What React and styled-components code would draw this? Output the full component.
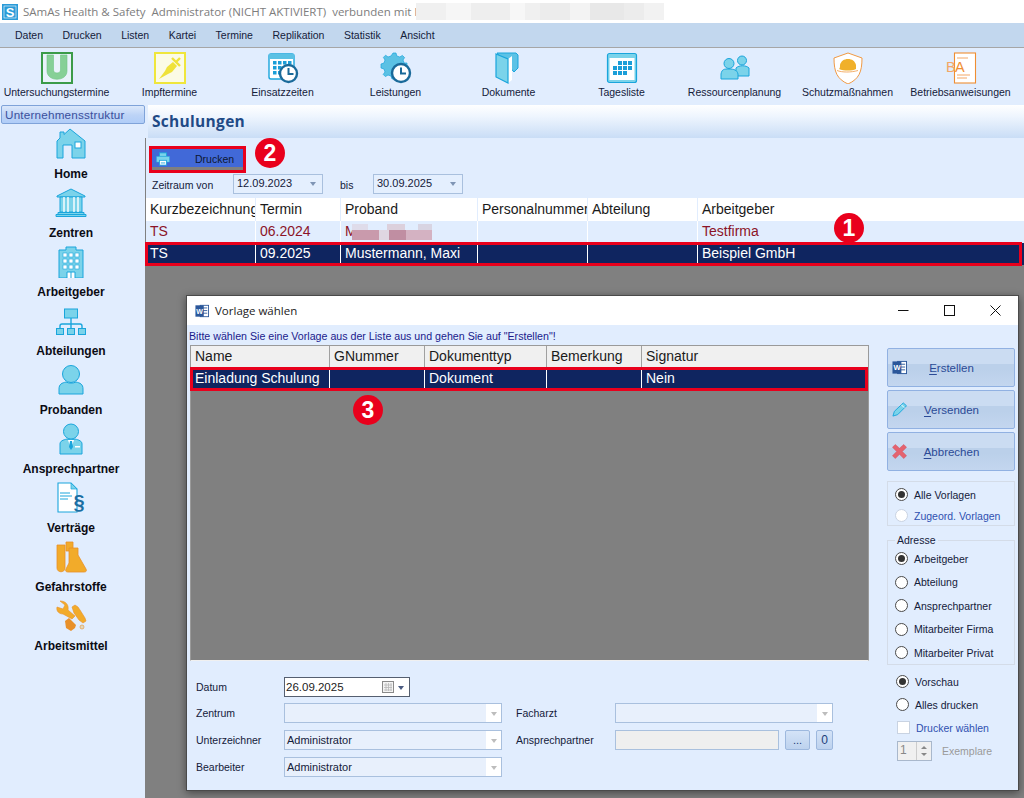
import React from "react";
import styled, { createGlobalStyle } from "styled-components";

const Global = createGlobalStyle`
  html, body { margin: 0; padding: 0; background: #808080; overflow: hidden; }
  * { box-sizing: border-box; }
`;

const Root = styled.div`
  position: relative;
  width: 1024px;
  height: 798px;
  overflow: hidden;
  display: flex;
  flex-direction: column;
  font-family: "Liberation Sans", Arial, sans-serif;
  font-size: 10.5px;
  color: #111;
  background: #808080;
`;
const TitleBar = styled.div`
  height: 23px;
  background: #fff;
  display: flex;
  align-items: center;
  padding-left: 2px;
  gap: 5px;
  font-family: "Open Sans", sans-serif;
  font-size: 11.5px;
  color: #7d7d7d;
  white-space: pre;
`;
const Mosaic = styled.div`
  width: 248px;
  height: 17px;
  margin-left: -6px;
  background: linear-gradient(90deg, #f0f0f0 0 12%, #f6f6f6 12% 22%, #eeeeee 22% 38%, #f7f7f7 38% 44%, #f0f0f0 44% 50%, #ececec 50% 62%, #f3f3f3 62% 70%, #e8e8e8 70% 84%, #ececec 84% 92%, #f2f2f2 92% 100%);
`;
const MenuBar = styled.div`
  height: 25px;
  background: #c2d7ee;
  border-bottom: 1px solid #a6a6a6;
  display: flex;
  align-items: center;
  padding-left: 15px;
  gap: 19.5px;
  color: #14203a;
`;
const ToolBar = styled.div`
  height: 57px;
  background: #e1edfe;
  display: grid;
  grid-template-columns: repeat(9, 113px);
`;
const ToolItem = styled.div`
  display: flex;
  flex-direction: column;
  align-items: center;
  padding-top: 4px;
  white-space: nowrap;
  color: #14203a;
`;
const ToolLabel = styled.span`
  margin-top: 2px;
  line-height: 13px;
`;
const Body = styled.div`
  flex: 1;
  display: flex;
  min-height: 0;
`;
const Sidebar = styled.div`
  width: 145px;
  background: #e1edfe;
  display: flex;
  flex-direction: column;
`;
const SideTab = styled.div`
  height: 19px;
  margin: 0 0 4px 1px;
  width: 144px;
  border: 1px solid #7fa3d9;
  border-radius: 2px;
  background: linear-gradient(#dbe8fb, #bcd3f6 55%, #b0cdf8);
  color: #3a4f9c;
  font-size: 11.7px;
  line-height: 17px;
  padding-left: 3px;
  letter-spacing: .2px;
`;
const SideItem = styled.div`
  height: 59px;
  padding-right: 3px;
  display: flex;
  flex-direction: column;
  align-items: center;
`;
const SideLabel = styled.span`
  margin-top: 7px;
  font-weight: 700;
  font-size: 12px;
  line-height: 14px;
  color: #0b0b14;
`;
const Main = styled.div`
  flex: 1;
  padding-left: 1px;
  display: flex;
  flex-direction: column;
  min-width: 0;
`;
const Header = styled.div`
  height: 33px;
  margin-left: -1px;
  border-left: 3px solid #e1edfe;
  background: linear-gradient(#fff, #eef5fe 35%, #c9ddf6);
  padding-left: 4px;
  font-family: "Open Sans", sans-serif;
  font-weight: 700;
  font-size: 15.5px;
  line-height: 32px;
  color: #1f4a86;
  letter-spacing: .3px;
`;
const Panel = styled.div`
  height: 60px;
  background: #e1edfe;
  padding: 8px 0 0 3px;
`;
const PrintButton = styled.div`
  width: 97px;
  height: 27px;
  border: 3px solid #e9001c;
  background: linear-gradient(#4169d8 88%, #7f7f7f 88%);
  display: flex;
  align-items: center;
  padding: 0 0 2px 4px;
  color: #0d1730;
`;
const PrintText = styled.span`
  margin-left: 25px;
`;
const FilterRow = styled.div`
  display: grid;
  grid-template-columns: 81px 90px 17px 33px 90px;
  align-items: center;
  margin: 1px 0 0 3px;
  height: 20px;
  color: #14203a;
`;
const FilterLabel = styled.span`
  grid-column: ${p => p.$col};
  padding-top: 1px;
`;
const DateBox = styled.div`
  grid-column: ${p => p.$col};
  height: 20px;
  border: 1px solid #a9c0de;
  background: #e4effe;
  display: flex;
  align-items: center;
  justify-content: space-between;
  padding: 0 6px 2px 3px;
  font-size: 11px;
  color: #14203a;
`;
const Caret = styled.span`
  width: 0;
  height: 0;
  margin-top: 2px;
  border-left: 3.5px solid transparent;
  border-right: 3.5px solid transparent;
  border-top: 4px solid ${p => p.$color || "#7f95b5"};
`;
const Row = styled.div`
  position: relative;
  display: flex;
  height: ${p => p.$h}px;
  background: ${p => p.$bg};
  color: ${p => p.$color};
  font-size: 14px;
  &::after {
    content: "";
    display: ${p => (p.$outlined ? "block" : "none")};
    position: absolute;
    left: ${p => p.$ol}px;
    right: ${p => p.$or}px;
    top: -1px;
    bottom: -1px;
    border: 3px solid #e9001c;
    pointer-events: none;
  }
`;
const Cell = styled.div`
  width: ${p => (p.$w ? `${p.$w}px` : "auto")};
  flex: ${p => (p.$w ? "none" : "1")};
  padding-left: 4px;
  border-right: 1px solid ${p => (p.$w ? p.$line : "transparent")};
  line-height: ${p => p.$lh}px;
  white-space: nowrap;
  overflow: hidden;
`;
const Smudge = styled.span`
  display: inline-block;
  width: 80px;
  height: 16px;
  vertical-align: -4px;
  margin-left: -5px;
  background:
    linear-gradient(90deg, #dfdcea 0 20%, transparent 20% 44%, #dcd0dc 44% 66%, transparent 66% 82%, #d8d4e2 82% 100%) top / 100% 6px no-repeat,
    linear-gradient(90deg, #c99aac 0 34%, #dfd6e2 34% 46%, #c08ea2 46% 68%, #d4b2c2 68% 100%) bottom / 100% 10px no-repeat;
`;
const Desk = styled.div`
  flex: 1;
`;
const Badge = styled.div`
  position: absolute;
  left: ${p => p.$x - 15}px;
  top: ${p => p.$y - 15}px;
  width: 30px;
  height: 30px;
  border-radius: 50%;
  background: #e9001c;
  color: #fff;
  font-weight: 700;
  font-size: 23px;
  line-height: 30px;
  text-align: center;
  z-index: 5;
`;
const Modal = styled.div`
  position: absolute;
  left: 186px;
  top: 295px;
  width: 833px;
  height: 496px;
  border: 1px solid #4a4a4a;
  box-shadow: 0 2px 8px rgba(0, 0, 0, .45);
  display: flex;
  flex-direction: column;
  background: #e1edfe;
`;
const ModalTitle = styled.div`
  height: 29px;
  background: #fff;
  display: flex;
  align-items: center;
  padding-left: 8px;
  font-family: "Open Sans", sans-serif;
  font-size: 11.5px;
  color: #222;
  flex: none;
`;
const TitleText = styled.span`
  margin-left: 6px;
`;
const WinControls = styled.div`
  margin-left: auto;
  display: flex;
`;
const WinButton = styled.div`
  width: 46px;
  height: 29px;
  display: flex;
  align-items: center;
  justify-content: center;
`;
const ModalBody = styled.div`
  flex: 1;
  display: flex;
  min-height: 0;
`;
const LeftCol = styled.div`
  width: 682px;
  padding: 4px 0 0 2px;
  flex: none;
`;
const Hint = styled.div`
  height: 16px;
  line-height: 14px;
  font-size: 10.65px;
  color: #1a1a8c;
  white-space: nowrap;
`;
const TemplateGrid = styled.div`
  width: 679px;
  margin-left: 1px;
  height: 316px;
  background: #808080;
  border: 1px solid #9a9a9a;
  border-bottom-color: #f0f0f0;
`;
const Form = styled.div`
  display: grid;
  grid-template-columns: 88px 218px 113px 218px;
  grid-template-rows: 26px 27px 27px 20px;
  margin: 16px 0 0 7px;
  color: #14203a;
`;
const FormLabel = styled.div`
  height: 20px;
  line-height: 20px;
  padding-left: ${p => p.$pad || 0}px;
  white-space: nowrap;
`;
const DateInput = styled.div`
  width: 126px;
  height: 20px;
  border: 1px solid #555f70;
  background: #fff;
  display: flex;
  align-items: center;
  padding: 0 5px 0 1px;
  font-size: 11.5px;
  color: #222;
`;
const CalIcon = styled.svg`
  margin-left: auto;
  margin-right: 2px;
`;
const Select = styled.div`
  height: 20px;
  border: 1px solid #a9c0de;
  background: #e8f0fc;
  display: flex;
  align-items: center;
  padding-left: 2px;
  font-size: 11px;
  color: #14203a;
`;
const SelectArrow = styled.div`
  margin-left: auto;
  width: 15px;
  height: 18px;
  background: #fff;
  display: flex;
  align-items: center;
  justify-content: center;
`;
const ContactRow = styled.div`
  display: flex;
  gap: 6px;
  height: 20px;
`;
const ReadOnly = styled.div`
  width: 164px;
  border: 1px solid #a9c0de;
  background: #efefef;
`;
const SmallButton = styled.div`
  width: ${p => p.$w}px;
  border: 1px solid #9db8de;
  border-radius: 2px;
  background: linear-gradient(#d4e3f7, #bdd2ee);
  color: #1d3f7a;
  text-align: center;
  font-size: ${p => p.$size}px;
  line-height: 18px;
`;
const RightCol = styled.div`
  width: 128px;
  margin-left: 18px;
  padding-top: 23px;
  display: flex;
  flex-direction: column;
`;
const ActionButton = styled.div`
  height: 39px;
  margin-bottom: 3px;
  border: 1px solid #91b1e2;
  border-radius: 2px;
  background: linear-gradient(#cbdcf2 0 40%, #bbd0ea 40% 55%, #c3d6ef 100%);
  display: flex;
  align-items: center;
  padding-left: 4px;
  color: #2b4a96;
  flex: none;
`;
const ActionText = styled.span`
  flex: 1;
  text-align: center;
  padding-right: 18px;
  font-size: 11.5px;
  & u { text-underline-offset: 2px; }
`;
const Box = styled.div`
  position: relative;
  height: ${p => p.$h}px;
  margin-top: ${p => p.$mt}px;
  padding: ${p => p.$pt}px 0 0 7px;
  border: 1px solid #d4dce8;
`;
const PlainStack = styled.div`
  margin-top: 5px;
`;
const Legend = styled.span`
  position: absolute;
  left: 7px;
  top: -7px;
  padding: 0 2px;
  background: #e1edfe;
  line-height: 13px;
  color: #14203a;
`;
const RadioRow = styled.div`
  height: ${p => p.$h}px;
  display: flex;
  align-items: center;
  gap: 6px;
  padding-left: ${p => p.$pad || 0}px;
  color: ${p => p.$color || "#14203a"};
  white-space: nowrap;
`;
const Radio = styled.span`
  width: 13px;
  height: 13px;
  border-radius: 50%;
  background: #fff;
  border: 1px solid ${p => (p.$off ? "#c9d3e2" : "#4a4a4a")};
  display: flex;
  align-items: center;
  justify-content: center;
  flex: none;
  &::after {
    content: "";
    display: ${p => (p.$on ? "block" : "none")};
    width: 7px;
    height: 7px;
    border-radius: 50%;
    background: #333;
  }
`;
const Check = styled.span`
  width: 13px;
  height: 13px;
  background: #fff;
  border: 1px solid #c9d3e2;
  flex: none;
`;
const SpinRow = styled.div`
  display: flex;
  align-items: center;
  gap: 10px;
  margin: 1.5px 0 0 10px;
  color: #9a9a9a;
`;
const Spinner = styled.div`
  width: 35px;
  height: 20px;
  border: 1px solid #a9b8cc;
  background: #f0f0f0;
  display: flex;
  padding-left: 2px;
  line-height: 17px;
  font-size: 12px;
  color: #888;
`;
const SpinArrows = styled.div`
  margin-left: auto;
  width: 15px;
  border-left: 1px solid #ccc;
  display: flex;
  flex-direction: column;
  align-items: center;
  justify-content: space-around;
  padding: 2px 0;
`;
const SpinUp = styled.span`
  width: 0;
  height: 0;
  border-left: 3px solid transparent;
  border-right: 3px solid transparent;
  border-bottom: 3px solid #888;
`;
const SpinDown = styled(SpinUp)`
  border-bottom: 0;
  border-top: 3px solid #888;
`;

/* ---------- icons ---------- */
const F = "#7bd3ea";
const S = "#1aa5dc";
const O = "#f2ab2a";
const OD = "#e8902a";

const Svg = ({ children, size = 32 }) => (
  <svg width={size} height={size} viewBox="0 0 32 32" style={{ display: "block", flex: "none" }}>{children}</svg>
);

const IconU = () => (
  <Svg>
    <rect x="1" y="1" width="30" height="30" fill="#e9f2fb" stroke="#3b9b49" strokeWidth="2" />
    <path d="M6 3h6.500v15c0 4 7 4 7 0V3H26v16c0 11-20 11-20 0z" fill="#86d096" stroke="#6fc483" strokeWidth=".6" />
  </Svg>
);
const IconSyringe = () => (
  <Svg>
    <rect x="1" y="1" width="30" height="30" fill="#fbfbe6" stroke="#efe63c" strokeWidth="2" />
    <path d="M5 27l6-8 2-4 6-5 4 4-5 6-4 2z" fill="#efe23a" />
    <path d="M18 6l8 8M22 10l4-4" stroke="#efe23a" strokeWidth="2.400" fill="none" />
  </Svg>
);
const IconShiftCal = () => (
  <Svg>
    <rect x="2" y="2" width="25" height="25" rx="2" fill="#fff" stroke="#1aa5dc" strokeWidth="1.400" />
    <rect x="2" y="2" width="25" height="5" fill="#5bc1e4" />
    {[[6, 9], [11, 9], [16, 9], [21, 9], [6, 14], [11, 14], [16, 14], [6, 19], [11, 19]].map(([x, y]) => (
      <rect key={`${x}${y}`} x={x} y={y} width="3.500" height="3.500" fill="#1b9ed8" />
    ))}
    <circle cx="21.500" cy="21.500" r="8.500" fill="#fff" stroke="#1a6a9a" strokeWidth="2.400" />
    <path d="M21.500 16v6h5" fill="none" stroke="#1a6a9a" strokeWidth="2" />
  </Svg>
);
const IconGearClock = () => (
  <Svg>
    <path d="M13 1h3l.8 3 3 1 2.600-1.600 2.200 2.200L23 8l1.200 3H27v4l-3 1-1 3 1.600 2.600-3 3-2.600-1.600-3 1L15 27h-3l-1-3-3-1-2.600 1.600-2.200-2.200L5 20l-1-3-3-1v-4l3-1 1-3L3.400 5.400l2.200-2.200L8 5l3-1z" fill="#5bc1e4" stroke="#1aa5dc" strokeWidth=".7" />
    <circle cx="21" cy="21" r="9" fill="#fff" stroke="#1a6a9a" strokeWidth="2.400" />
    <path d="M21 15.500v6h5" fill="none" stroke="#1a6a9a" strokeWidth="2" />
  </Svg>
);
const IconDocs = () => (
  <Svg>
    <path d="M4 1h19l2 2v13l-4 4z" fill="#5cc2e6" stroke={S} strokeWidth="1" />
    <path d="M15 7l4-3v24l-4 3z" fill="#fff" />
    <path d="M3 2l12 5v24L3 25z" fill={F} stroke={S} strokeWidth="1.200" />
  </Svg>
);
const IconDayList = () => (
  <Svg>
    <rect x="1.500" y="1.500" width="29" height="29" rx="2" fill={F} stroke={S} strokeWidth="1.200" />
    <rect x="3.500" y="6" width="25" height="22" fill="#fff" />
    {[[12, 9], [17, 9], [22, 9], [7, 14], [12, 14], [17, 14], [22, 14], [7, 19], [12, 19], [17, 19]].map(([x, y]) => (
      <rect key={`${x}${y}`} x={x} y={y} width="4" height="4" fill="#1b9ed8" />
    ))}
  </Svg>
);
const IconPeople = () => (
  <Svg>
    <circle cx="23" cy="8.500" r="4.500" fill={F} stroke={S} />
    <path d="M17 16c3-3 10-3 13 0v8H17z" fill={F} stroke={S} />
    <circle cx="10" cy="11.500" r="5" fill={F} stroke={S} />
    <path d="M2 27v-5c1-5 3-5 8-5s8 1 9 5v5z" fill={F} stroke={S} />
  </Svg>
);
const IconShield = () => (
  <Svg>
    <path d="M16 1l14 5c0 14-3 21-14 26C5 27 2 20 2 6z" fill="#fff" stroke="#f09a45" strokeWidth="1" />
    <path d="M7 17c1-1 1-2 1-4 1-4 4-6 8-6s7 2 8 6v4c-4 2-12 2-17 0z" fill="#f0b02a" />
    <path d="M5 18.500c5 2 14 2 21 0" stroke="#f09a45" strokeWidth=".8" fill="none" />
  </Svg>
);
const IconBA = () => (
  <Svg>
    <rect x="9.500" y="1" width="21" height="30" fill="#fff" stroke="#ef8e32" strokeWidth="1.100" />
    <text x="1" y="20" fontFamily="Liberation Sans" fontSize="14.500" fill="#f3a766">B</text>
    <text x="10" y="20" fontFamily="Liberation Sans" fontSize="14.500" fill="#ef8e32">A</text>
    <path d="M12 6h11M12 23h13M12 26h10" stroke="#f3a766" strokeWidth="1" />
  </Svg>
);
const IconHome = () => (
  <Svg>
    <path d="M2 13l3-3V4h4v2.500L15 1l15 12v17H17V17H8v13H2z" fill={F} stroke={S} strokeWidth="1" />
    <rect x="20" y="14" width="6" height="6" fill="#fff" stroke={S} />
  </Svg>
);
const IconTemple = () => (
  <Svg>
    <path d="M2 9L16 2l14 7v1H2z" fill={F} stroke={S} />
    <path d="M5 10h22v15H5z" fill={F} stroke={S} />
    <path d="M9 10v15M13 10v15M19 10v15M23 10v15" stroke="#fff" strokeWidth="1.400" />
    <path d="M3 25.500h26v2H3zM1 27.500h30v2H1z" fill={F} stroke={S} />
  </Svg>
);
const IconBuilding = () => (
  <Svg>
    <path d="M4 4h7V1h10v3h7v28H4z" fill={F} stroke={S} />
    {[8, 14, 20].map(y => [8, 14, 20].map(x => (
      <rect key={`${x}${y}`} x={x} y={y - 1} width="4" height="4" fill="#fff" stroke={S} strokeWidth=".6" />
    )))}
    <path d="M12 32v-6h8v6M16 26v6" fill="#fff" stroke={S} />
  </Svg>
);
const IconOrg = () => (
  <Svg>
    <path d="M16 13v5M5 24v-3c0-1 1-2 2-2h18c1 0 2 1 2 2v3M16 18v6" stroke={S} strokeWidth="1.400" fill="none" />
    <rect x="9.500" y="4" width="13" height="9" fill={F} stroke={S} />
    <rect x="1.500" y="23.500" width="7" height="6" fill={F} stroke={S} />
    <rect x="12.500" y="23.500" width="7" height="6" fill={F} stroke={S} />
    <rect x="23.500" y="23.500" width="7" height="6" fill={F} stroke={S} />
  </Svg>
);
const IconPerson = () => (
  <Svg>
    <circle cx="16" cy="10" r="8.500" fill={F} stroke={S} />
    <path d="M4 30v-5c0-5 3-6 7-7 3 1.500 7 1.500 10 0 4 1 7 2 7 7v5z" fill={F} stroke={S} />
  </Svg>
);
const IconContact = () => (
  <Svg>
    <circle cx="16" cy="8.500" r="7.500" fill={F} stroke={S} />
    <path d="M5 31v-10c0-3 3-4 7-5 2 1 6 1 8 0 4 1 7 2 7 5v10z" fill={F} stroke={S} />
    <path d="M13 17h6l-3 9z" fill="#fff" />
    <path d="M15 18h2l1 6-2 3-2-3z" fill={S} />
    <rect x="20" y="23" width="5" height="1.500" fill="#fff" />
  </Svg>
);
const IconContract = () => (
  <Svg>
    <path d="M3 1h13l6 6v23H3z" fill="#fff" stroke={S} strokeWidth="1.100" />
    <path d="M16 1v6h6z" fill={F} stroke={S} strokeWidth=".7" />
    <path d="M5 11h10M5 14h12M5 17h8" stroke={S} strokeWidth="1" />
    <text x="18.500" y="27" fontFamily="Liberation Sans" fontWeight="700" fontSize="20" fill="#1b6ea2">§</text>
  </Svg>
);
const IconFlask = () => (
  <Svg>
    <path d="M2 4h8v23c0 5-8 5-8 0z" fill={O} stroke={OD} strokeWidth=".8" />
    <path d="M11 1h7v9h-7z" fill={O} stroke={OD} strokeWidth=".8" />
    <path d="M14 7h9v7l8 14c1 2 0 3-2 3H13c-2 0-3-1-2-3l3-6z" fill={O} stroke={OD} strokeWidth=".8" />
  </Svg>
);
const IconTools = () => (
  <Svg>
    <path d="M2 7c-1 4 2 7 6 7l9 5 3-3-7-6c1-5-2-9-8-9l5 4-2 4z" fill={O} stroke={OD} strokeWidth=".6" />
    <path d="M17 7l3-2 3 2 2 3 5 8 1 3-3 2-4-3-5-7z" fill={O} stroke={OD} strokeWidth=".6" />
    <path d="M10 21l4-3 7 7-1 3-4 3-5-3z" fill={OD} />
    <circle cx="27" cy="27" r="2" fill="#e0d8c0" stroke={OD} strokeWidth=".6" />
  </Svg>
);
const IconPrinter = ({ size = 14 }) => (
  <Svg size={size}>
    <rect x="8" y="2" width="16" height="8" fill={F} stroke={S} strokeWidth="2" />
    <rect x="1" y="10" width="30" height="13" fill={F} stroke={S} strokeWidth="1" />
    <rect x="8" y="19" width="16" height="11" fill="#fff" stroke={S} strokeWidth="2" />
    <path d="M11 25h10" stroke={S} strokeWidth="2" />
  </Svg>
);
const IconWord = ({ size = 14 }) => (
  <Svg size={size}>
    <rect x="12" y="3" width="19" height="26" fill="#fff" stroke="#2b579a" strokeWidth="2" />
    <path d="M18 9h10M18 15h10M18 21h10" stroke="#2b579a" strokeWidth="2" />
    <rect x="1" y="3" width="19" height="26" fill="#2b579a" />
    <text x="10.500" y="22" textAnchor="middle" fontFamily="Liberation Sans" fontWeight="700" fontSize="16" fill="#fff">W</text>
  </Svg>
);
const IconPencil = () => (
  <Svg size={15}>
    <path d="M2 30l3-10L24 2l7 6-19 19z" fill={F} stroke={S} strokeWidth="2" />
    <path d="M20 6l6 6" stroke="#fff" strokeWidth="2" />
  </Svg>
);
const IconCross = () => (
  <Svg size={15}>
    <path d="M7 1l9 8 9-8 6 6-9 9 9 9-6 6-9-9-9 9-6-6 9-9-9-9z" fill="#e4636f" stroke="#cf4b5a" strokeWidth="1" />
  </Svg>
);

/* ---------- data ---------- */
const tools = [
  ["Untersuchungstermine", IconU], ["Impftermine", IconSyringe], ["Einsatzzeiten", IconShiftCal],
  ["Leistungen", IconGearClock], ["Dokumente", IconDocs], ["Tagesliste", IconDayList],
  ["Ressourcenplanung", IconPeople], ["Schutzmaßnahmen", IconShield], ["Betriebsanweisungen", IconBA],
];
const sideItems = [
  ["Home", IconHome], ["Zentren", IconTemple], ["Arbeitgeber", IconBuilding], ["Abteilungen", IconOrg],
  ["Probanden", IconPerson], ["Ansprechpartner", IconContact], ["Verträge", IconContract],
  ["Gefahrstoffe", IconFlask], ["Arbeitsmittel", IconTools],
];
const menus = ["Daten", "Drucken", "Listen", "Kartei", "Termine", "Replikation", "Statistik", "Ansicht"];
const mainCols = [110, 85, 137, 110, 110, 0];
const tplCols = [139, 95, 122, 95, 0];

const Cells = ({ cols, values, line, lh }) => (
  <>
    {cols.map((w, i) => (
      <Cell key={i} $w={w} $line={line} $lh={lh}>{values[i]}</Cell>
    ))}
  </>
);

export default function App() {
  return (
    <Root>
      <Global />
      <TitleBar>
        <svg width="16" height="16" viewBox="0 0 16 16">
          <rect width="16" height="16" fill="#2a9bd8" />
          <rect x="2" y="2" width="12" height="12" fill="none" stroke="#fff" strokeWidth=".6" />
          <text x="8" y="13" textAnchor="middle" fontFamily="Liberation Sans" fontWeight="700" fontSize="13" fill="#fff">S</text>
        </svg>
        <span>SAmAs Health &amp; Safety  Administrator (NICHT AKTIVIERT)  verbunden mit l</span>
        <Mosaic />
      </TitleBar>
      <MenuBar>
        {menus.map(m => <span key={m}>{m}</span>)}
      </MenuBar>
      <ToolBar>
        {tools.map(([label, Icon]) => (
          <ToolItem key={label}>
            <Icon />
            <ToolLabel>{label}</ToolLabel>
          </ToolItem>
        ))}
      </ToolBar>
      <Body>
        <Sidebar>
          <SideTab>Unternehmensstruktur</SideTab>
          {sideItems.map(([label, Icon]) => (
            <SideItem key={label}>
              <Icon />
              <SideLabel>{label}</SideLabel>
            </SideItem>
          ))}
        </Sidebar>
        <Main>
          <Header>Schulungen</Header>
          <Panel>
            <PrintButton>
              <IconPrinter />
              <PrintText>Drucken</PrintText>
            </PrintButton>
            <FilterRow>
              <FilterLabel $col={1}>Zeitraum von</FilterLabel>
              <DateBox $col={2}>12.09.2023<Caret /></DateBox>
              <FilterLabel $col={4}>bis</FilterLabel>
              <DateBox $col={5}>30.09.2025<Caret /></DateBox>
            </FilterRow>
          </Panel>
          <Row $h={23} $bg="#fff" $color="#1a1a1a">
            <Cells cols={mainCols} line="#e1edfe" lh={22} values={["Kurzbezeichnung", "Termin", "Proband", "Personalnummer", "Abteilung", "Arbeitgeber"]} />
          </Row>
          <Row $h={22} $bg="#e1edfe" $color="#8c1428">
            <Cells cols={mainCols} line="#fff" lh={21} values={["TS", "06.2024", <>M<Smudge /></>, "", "", "Testfirma"]} />
          </Row>
          <Row $h={22} $bg="#0f2560" $color="#fff" $outlined $ol={-1} $or={2}>
            <Cells cols={mainCols} line="#fff" lh={20} values={["TS", "09.2025", "Mustermann, Maxi", "", "", "Beispiel GmbH"]} />
          </Row>
          <Desk />
        </Main>
      </Body>

      <Badge $x={849} $y={228}>1</Badge>
      <Badge $x={270} $y={153}>2</Badge>
      <Badge $x={368} $y={410}>3</Badge>

      <Modal>
        <ModalTitle>
          <IconWord />
          <TitleText>Vorlage wählen</TitleText>
          <WinControls>
            <WinButton>
              <svg width="11" height="11" viewBox="0 0 11 11"><path d="M0 5.500h10.500" stroke="#111" strokeWidth="1" /></svg>
            </WinButton>
            <WinButton>
              <svg width="11" height="11" viewBox="0 0 11 11"><rect x=".5" y=".5" width="10" height="10" fill="none" stroke="#111" /></svg>
            </WinButton>
            <WinButton>
              <svg width="11" height="11" viewBox="0 0 11 11"><path d="M.5.500l10 10M10.500.5l-10 10" stroke="#111" /></svg>
            </WinButton>
          </WinControls>
        </ModalTitle>
        <ModalBody>
          <LeftCol>
            <Hint>Bitte wählen Sie eine Vorlage aus der Liste aus und gehen Sie auf "Erstellen"!</Hint>
            <TemplateGrid>
              <Row $h={22} $bg="#f0f0f0" $color="#1a1a1a">
                <Cells cols={tplCols} line="#a0a0a0" lh={21} values={["Name", "GNummer", "Dokumenttyp", "Bemerkung", "Signatur"]} />
              </Row>
              <Row $h={22} $bg="#0f2560" $color="#fff" $outlined $ol={-1} $or={0}>
                <Cells cols={tplCols} line="#fff" lh={21} values={["Einladung Schulung", "", "Dokument", "", "Nein"]} />
              </Row>
            </TemplateGrid>
            <Form>
              <FormLabel>Datum</FormLabel>
              <DateInput>
                26.09.2025
                <CalIcon width="15" height="14" viewBox="0 0 15 14">
                  <rect x="1.500" y="1.500" width="11" height="11" fill="#f4f4f4" stroke="#8a8a8a" />
                  <path d="M3 5h8M3 7.500h8M3 10h8M5 3v8M7.500 3v8M10 3v8" stroke="#b8b8b8" strokeWidth=".8" />
                </CalIcon>
                <Caret $color="#4a5a80" />
              </DateInput>
              <span />
              <span />
              <FormLabel>Zentrum</FormLabel>
              <Select><SelectArrow><Caret $color="#bdbdbd" /></SelectArrow></Select>
              <FormLabel $pad={14}>Facharzt</FormLabel>
              <Select><SelectArrow><Caret $color="#bdbdbd" /></SelectArrow></Select>
              <FormLabel>Unterzeichner</FormLabel>
              <Select>Administrator<SelectArrow><Caret $color="#bdbdbd" /></SelectArrow></Select>
              <FormLabel $pad={14}>Ansprechpartner</FormLabel>
              <ContactRow>
                <ReadOnly />
                <SmallButton $w={25} $size={11}>...</SmallButton>
                <SmallButton $w={17} $size={12}>0</SmallButton>
              </ContactRow>
              <FormLabel>Bearbeiter</FormLabel>
              <Select>Administrator<SelectArrow><Caret $color="#bdbdbd" /></SelectArrow></Select>
            </Form>
          </LeftCol>
          <RightCol>
            <ActionButton><IconWord size={15} /><ActionText><u>E</u>rstellen</ActionText></ActionButton>
            <ActionButton><IconPencil /><ActionText><u>V</u>ersenden</ActionText></ActionButton>
            <ActionButton><IconCross /><ActionText><u>A</u>bbrechen</ActionText></ActionButton>
            <Box $h={45} $mt={7} $pt={2}>
              <RadioRow $h={21}><Radio $on />Alle Vorlagen</RadioRow>
              <RadioRow $h={21} $color="#2f50b0"><Radio $off />Zugeord. Vorlagen</RadioRow>
            </Box>
            <Box $h={125} $mt={14} $pt={6}>
              <Legend>Adresse</Legend>
              <RadioRow $h={23.5}><Radio $on />Arbeitgeber</RadioRow>
              <RadioRow $h={23.5}><Radio />Abteilung</RadioRow>
              <RadioRow $h={23.5}><Radio />Ansprechpartner</RadioRow>
              <RadioRow $h={23.5}><Radio />Mitarbeiter Firma</RadioRow>
              <RadioRow $h={23.5}><Radio />Mitarbeiter Privat</RadioRow>
            </Box>
            <PlainStack>
              <RadioRow $h={23} $pad={9}><Radio $on />Vorschau</RadioRow>
              <RadioRow $h={23} $pad={9}><Radio />Alles drucken</RadioRow>
              <RadioRow $h={23} $pad={10} $color="#2f50b0"><Check />Drucker wählen</RadioRow>
              <SpinRow>
                <Spinner>1<SpinArrows><SpinUp /><SpinDown /></SpinArrows></Spinner>
                Exemplare
              </SpinRow>
            </PlainStack>
          </RightCol>
        </ModalBody>
      </Modal>
    </Root>
  );
}
